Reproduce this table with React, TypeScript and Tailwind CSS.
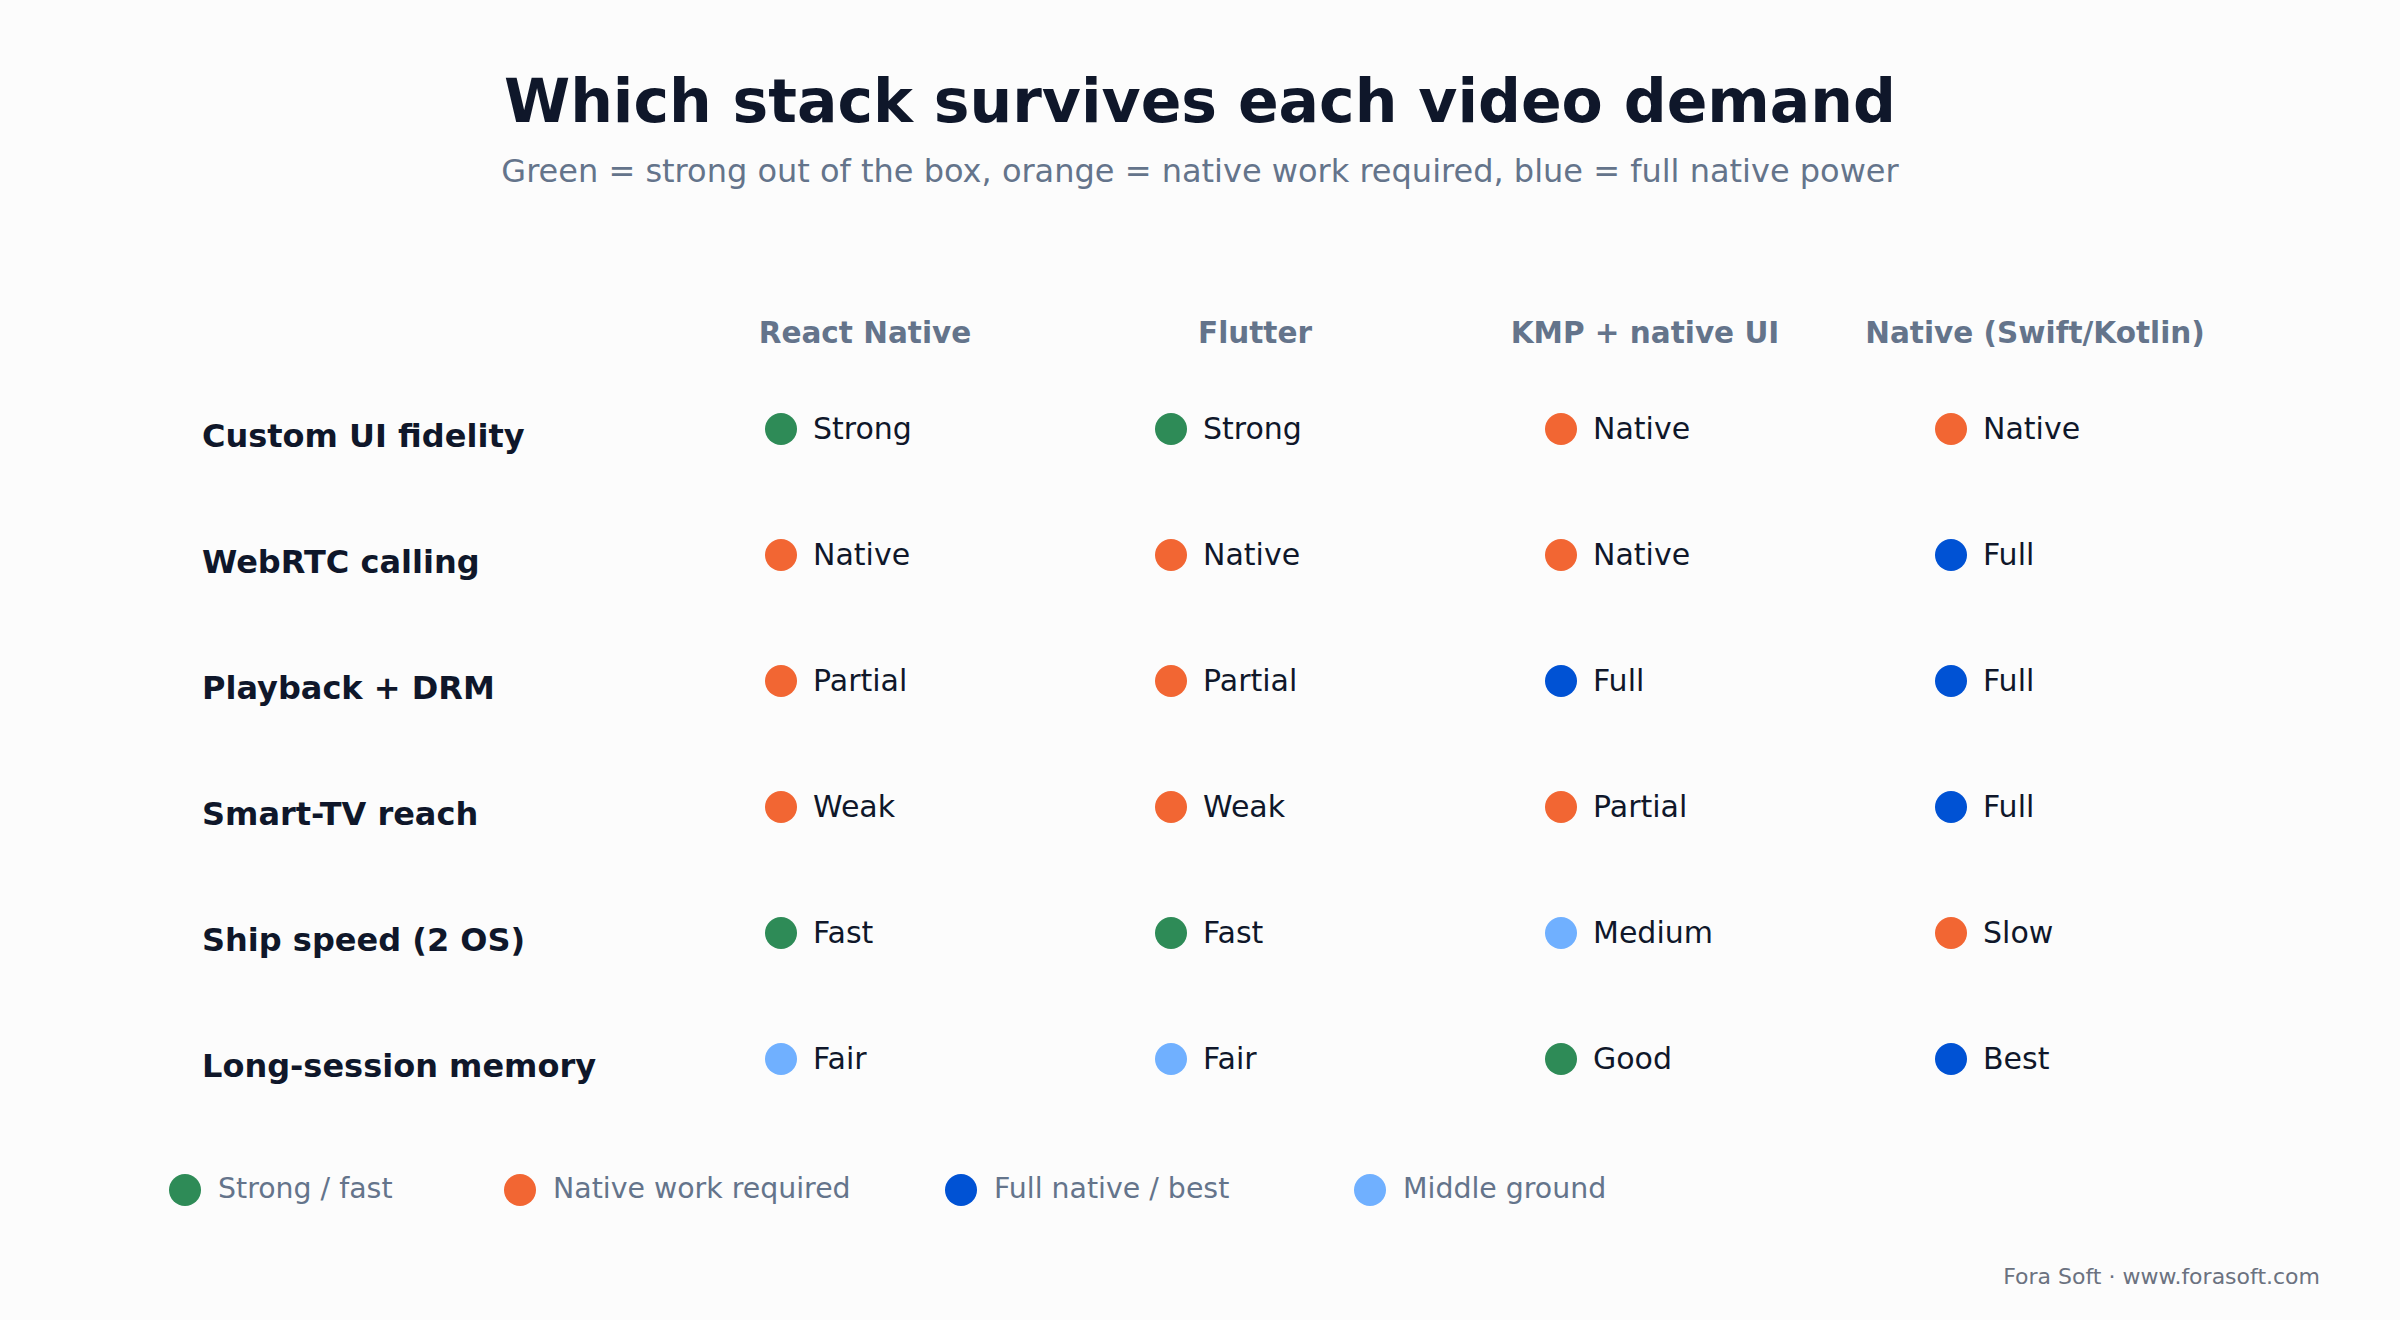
import React from "react";

type Tone = "green" | "orange" | "blue" | "light";

const dotClass: Record<Tone, string> = {
  green: "bg-[#2e8b57]",
  orange: "bg-[#f26633]",
  blue: "bg-[#0052d4]",
  light: "bg-[#70b0ff]",
};

const columns = ["React Native", "Flutter", "KMP + native UI", "Native (Swift/Kotlin)"];

const rows: { label: string; cells: [Tone, string][] }[] = [
  {
    label: "Custom UI fidelity",
    cells: [["green", "Strong"], ["green", "Strong"], ["orange", "Native"], ["orange", "Native"]],
  },
  {
    label: "WebRTC calling",
    cells: [["orange", "Native"], ["orange", "Native"], ["orange", "Native"], ["blue", "Full"]],
  },
  {
    label: "Playback + DRM",
    cells: [["orange", "Partial"], ["orange", "Partial"], ["blue", "Full"], ["blue", "Full"]],
  },
  {
    label: "Smart-TV reach",
    cells: [["orange", "Weak"], ["orange", "Weak"], ["orange", "Partial"], ["blue", "Full"]],
  },
  {
    label: "Ship speed (2 OS)",
    cells: [["green", "Fast"], ["green", "Fast"], ["light", "Medium"], ["orange", "Slow"]],
  },
  {
    label: "Long-session memory",
    cells: [["light", "Fair"], ["light", "Fair"], ["green", "Good"], ["blue", "Best"]],
  },
];

const legend: { tone: Tone; text: string; width: string }[] = [
  { tone: "green", text: "Strong / fast", width: "w-[335px]" },
  { tone: "orange", text: "Native work required", width: "w-[441px]" },
  { tone: "blue", text: "Full native / best", width: "w-[409px]" },
  { tone: "light", text: "Middle ground", width: "w-[300px]" },
];

const Dot: React.FC<{ tone: Tone }> = ({ tone }) => (
  <span className={`block w-[32px] h-[32px] rounded-full shrink-0 ${dotClass[tone]}`} />
);

const App: React.FC = () => {
  return (
    <div className="w-[2400px] h-[1320px] bg-[#fcfcfc] font-['DejaVu_Sans',sans-serif] flex flex-col">
      {/* Title */}
      <h1 className="pt-[71px] text-center text-[60px] leading-none font-bold text-[#0f172a]">
        Which stack survives each video demand
      </h1>
      <p className="mt-[24px] text-center text-[32px] leading-none text-[#64748b]">
        Green = strong out of the box, orange = native work required, blue = full native power
      </p>

      {/* Column headers */}
      <div className="flex mt-[132px]">
        <div className="w-[670px]" />
        {columns.map((c) => (
          <div key={c} className="w-[390px] text-center text-[29.5px] leading-none font-bold text-[#64748b]">
            {c}
          </div>
        ))}
      </div>

      {/* Rows */}
      <div className="mt-[17px] flex flex-col">
        {rows.map((r) => (
          <div key={r.label} className="flex items-center h-[126px]">
            <div className="w-[670px] pl-[202px] mt-[15px] text-[32px] leading-none font-bold text-[#0f172a]">
              {r.label}
            </div>
            {r.cells.map(([tone, text], i) => (
              <div key={i} className="w-[390px] pl-[95px] flex items-center gap-[16px]">
                <Dot tone={tone} />
                <span className="text-[30px] leading-none text-[#0f172a]">{text}</span>
              </div>
            ))}
          </div>
        ))}
      </div>

      {/* Legend */}
      <div className="mt-[51px] pl-[169px] flex items-center h-[34px]">
        {legend.map((l) => (
          <div key={l.text} className={`${l.width} flex items-center gap-[17px]`}>
            <Dot tone={l.tone} />
            <span className="text-[28.4px] leading-none text-[#64748b]">{l.text}</span>
          </div>
        ))}
      </div>

      {/* Footer */}
      <div className="mt-[59px] pr-[80px] text-right text-[22px] leading-none text-[#6b7280]">
        Fora Soft · www.forasoft.com
      </div>
    </div>
  );
};

export default App;
